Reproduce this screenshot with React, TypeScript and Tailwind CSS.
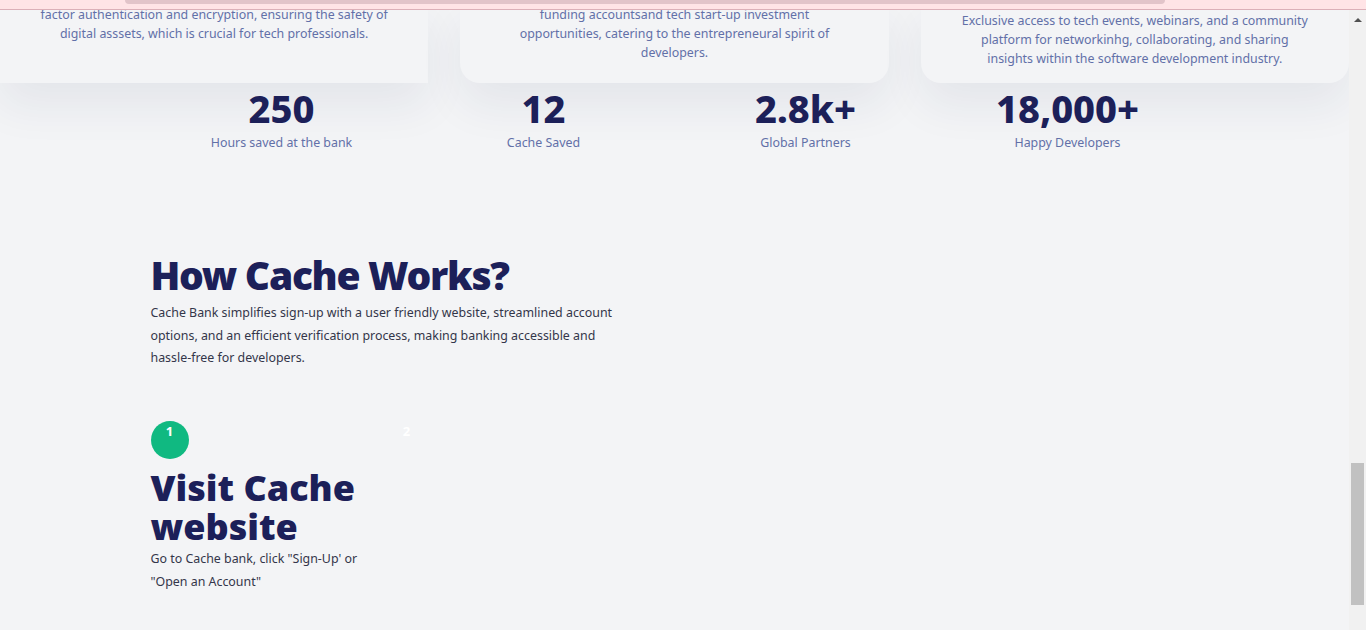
const cards = [
  {
    pad: "pt-[5px]",
    rounded: "",
    lines: [
      "factor authentication and encryption, ensuring the safety of",
      "digital asssets, which is crucial for tech professionals.",
    ],
  },
  {
    pad: "pt-[5px]",
    rounded: "rounded-b-[20px]",
    lines: [
      "funding accountsand tech start-up investment",
      "opportunities, catering to the entrepreneural spirit of",
      "developers.",
    ],
  },
  {
    pad: "pt-[11px]",
    rounded: "rounded-b-[20px]",
    lines: [
      "Exclusive access to tech events, webinars, and a community",
      "platform for networkinhg, collaborating, and sharing",
      "insights within the software development industry.",
    ],
  },
];

const stats = [
  { value: "250", label: "Hours saved at the bank" },
  { value: "12", label: "Cache Saved" },
  { value: "2.8k+", label: "Global Partners" },
  { value: "18,000+", label: "Happy Developers" },
];

export default function App() {
  return (
    <div className="relative h-[630px] overflow-hidden bg-[#f3f4f6] font-['Noto_Sans','Open_Sans',sans-serif]">
      {/* fixed navbar, scrolled mostly out of view */}
      <header className="absolute inset-x-0 top-0 z-10 h-[10px] border-b border-[#dcb0b8] bg-[#ffe4e6]">
        <div className="ml-[125px] h-[4px] w-[1040px] rounded-b-[8px] bg-[#e2c4c9]" />
      </header>

      <div className="flex h-full">
        <main className="min-w-0 flex-1">
          <div className="grid grid-cols-3 gap-8">
            {cards.map((card, i) => (
              <div
                key={i}
                className={`h-[83px] bg-[#f3f4f6] px-10 text-center text-[12.4px] leading-[19px] text-[#6270a8] shadow-[0_22px_45px_rgba(30,40,80,0.07)] ${card.pad} ${card.rounded}`}
              >
                {card.lines.map((line, j) => (
                  <div key={j} className="whitespace-nowrap">
                    {line}
                  </div>
                ))}
              </div>
            ))}
          </div>

          <div className="mx-auto mt-[3px] grid max-w-[1048px] grid-cols-4">
            {stats.map((s) => (
              <div key={s.label} className="text-center">
                <div className="text-[38px] font-extrabold leading-[44px] text-[#1c2059]">{s.value}</div>
                <div className="mt-[3px] text-[12.4px] leading-5 text-[#6270a8]">{s.label}</div>
              </div>
            ))}
          </div>

          <section className="mx-auto mt-[100px] max-w-[1048px]">
            <h2 className="text-[39px] font-black leading-[44px] tracking-[-1.3px] text-[#1c2059]">How Cache Works?</h2>
            <p className="mt-[5px] max-w-[472px] text-[12.4px] leading-[22.5px] text-[#33364a]">
              Cache Bank simplifies sign-up with a user friendly website, streamlined account options, and an
              efficient verification process, making banking accessible and hassle-free for developers.
            </p>

            <div className="mt-[51px] flex gap-[17px]">
              <div className="w-[220px]">
                <div className="h-[38px] w-[38px] rounded-full bg-[#10b981] text-center text-[13px] font-bold leading-5 text-white">
                  1
                </div>
                <h3 className="mt-[9px] text-[36px] font-black leading-[39px] text-[#1c2059]">Visit Cache website</h3>
                <p className="mt-px text-[12.4px] leading-[23px] text-[#33364a]">
                  Go to Cache bank, click "Sign-Up' or "Open an Account"
                </p>
              </div>
              <div className="w-[220px]">
                <div className="h-[38px] w-[38px] rounded-full text-center text-[13px] font-bold leading-5 text-white">
                  2
                </div>
              </div>
            </div>
          </section>
        </main>

        {/* scrollbar */}
        <div className="flex w-[17px] flex-col items-center bg-[#f1f1f1] pt-[18px]">
          <div className="h-0 w-0 border-x-[4px] border-b-[4px] border-x-transparent border-b-[#505050]" />
          <div className="mt-[441px] h-[142px] w-[13px] bg-[#c1c1c1]" />
        </div>
      </div>
    </div>
  );
}
